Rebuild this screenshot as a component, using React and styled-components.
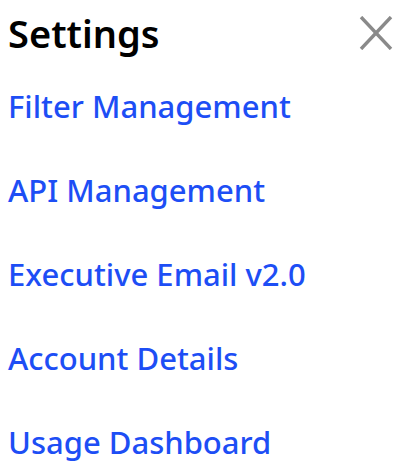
import React from "react";
import styled, { createGlobalStyle } from "styled-components";

const GlobalStyle = createGlobalStyle`
  html, body {
    margin: 0;
    padding: 0;
    background: #ffffff;
  }
  body {
    font-family: "Noto Sans", "Open Sans", sans-serif;
  }
`;

const Panel = styled.div`
  width: 409px;
  height: 475px;
  box-sizing: border-box;
  padding: 8px 16px 0 8px;
  display: flex;
  flex-direction: column;
`;

const Header = styled.div`
  display: flex;
  align-items: center;
  justify-content: space-between;
  height: 50px;
`;

const Title = styled.h1`
  margin: 0;
  font-size: 38px;
  font-weight: 650;
  color: #000;
  line-height: 1;
`;

const CloseButton = styled.button`
  border: 0;
  background: transparent;
  padding: 0;
  width: 34px;
  height: 34px;
  display: flex;
  align-items: center;
  justify-content: center;
  cursor: pointer;
`;

const Menu = styled.nav`
  display: flex;
  flex-direction: column;
  gap: 40px;
  margin-top: 26px;
`;

const MenuLink = styled.a`
  font-size: 31px;
  font-weight: 500;
  line-height: 44px;
  color: #1d4ef5;
  text-decoration: none;
`;

const items = [
  "Filter Management",
  "API Management",
  "Executive Email v2.0",
  "Account Details",
  "Usage Dashboard",
];

export default function App() {
  return (
    <>
      <GlobalStyle />
      <Panel>
        <Header>
          <Title>Settings</Title>
          <CloseButton aria-label="Close">
            <svg width="34" height="34" viewBox="0 0 34 34">
              <path d="M2 1 L32 33 M32 1 L2 33" stroke="#8a8a8a" strokeWidth="3.4" fill="none" />
            </svg>
          </CloseButton>
        </Header>
        <Menu>
          {items.map((label) => (
            <MenuLink key={label} href="#">
              {label}
            </MenuLink>
          ))}
        </Menu>
      </Panel>
    </>
  );
}
